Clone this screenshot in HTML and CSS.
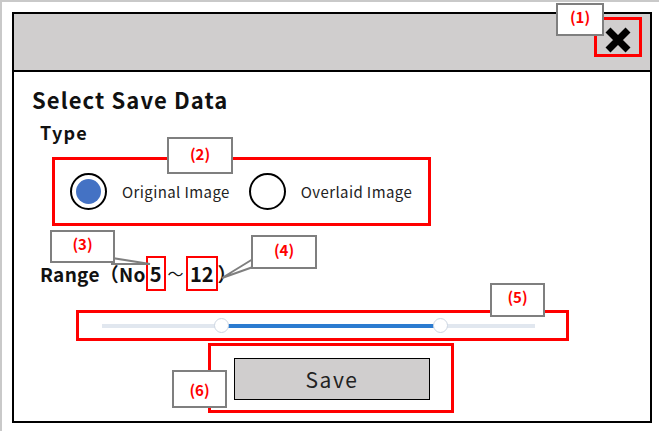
FILE: index.html
```html
<!DOCTYPE html>
<html>
<head>
<meta charset="utf-8">
<link rel="stylesheet" href="styles.css">
</head>
<body>
<div class="dialog">
  <div class="header">
    <div class="close hl">
      <svg width="28" height="26" viewBox="0 0 28 26"><path d="M4 3 L24 23 M24 3 L4 23" stroke="#000" stroke-width="7"/></svg>
    </div>
  </div>
  <div class="content">
    <div class="title">Select Save Data</div>
    <div class="label">Type</div>
    <div class="radios hl">
      <div class="radio">
        <span class="dot checked"></span>
        <span class="rtext">Original Image</span>
      </div>
      <div class="radio">
        <span class="dot"></span>
        <span class="rtext">Overlaid Image</span>
      </div>
    </div>
    <div class="range">Range（No<span class="num hl">5</span><span class="tilde">～</span><span class="num hl">12</span>）</div>
    <div class="slider hl">
      <div class="track">
        <div class="fill" style="left:120px;width:219px"></div>
        <span class="thumb" style="left:120px"></span>
        <span class="thumb" style="left:339px"></span>
      </div>
    </div>
    <div class="save-wrap hl">
      <button class="save">Save</button>
    </div>
  </div>

  <svg class="tails" width="640" height="411" viewBox="0 0 640 411">
    <polygon points="98,250 136,250 98,244" fill="#fff" stroke="#7f7f7f" stroke-width="2"/>
    <polygon points="239,245 208,264 239,253" fill="#fff" stroke="#7f7f7f" stroke-width="2"/>
  </svg>
  <div class="callout c1">(1)</div>
  <div class="callout c2">(2)</div>
  <div class="callout c3">(3)</div>
  <div class="callout c4">(4)</div>
  <div class="callout c5">(5)</div>
  <div class="callout c6">(6)</div>
</div>
</body>
</html>
```
FILE: styles.css
```css
html, body {
  margin: 0;
  padding: 0;
  background: #fff;
}
body {
  width: 659px;
  height: 431px;
  box-sizing: border-box;
  border-top: 2px solid #c9c9c9;
  border-left: 2px solid #c9c9c9;
  font-family: "Noto Sans CJK JP", "Noto Sans", sans-serif;
  color: #111;
  overflow: hidden;
}
.dialog {
  position: relative;
  margin: 10px 0 0 10px;
  width: 640px;
  height: 411px;
  box-sizing: border-box;
  border: 2px solid #000;
}
.header {
  height: 56px;
  background: #d0cece;
  border-bottom: 2px solid #000;
  display: flex;
  justify-content: flex-end;
  align-items: flex-start;
}
.hl {
  border: 3px solid #ff0000;
  box-sizing: border-box;
}
.close {
  width: 48px;
  height: 40px;
  margin: 3px 8px 0 0;
  padding-top: 6px;
  display: flex;
  align-items: center;
  justify-content: center;
}
.close svg { display: block; }
.content {
  padding: 0 0 0 18px;
}
.title {
  font-weight: bold;
  font-size: 22px;
  line-height: 26px;
  letter-spacing: 1.1px;
  margin-top: 14px;
  height: 26px;
}
.label {
  font-weight: bold;
  font-size: 18px;
  line-height: 22px;
  letter-spacing: 1.2px;
  margin: 9px 0 0 8px;
  height: 22px;
}
.radios {
  margin: 14px 0 0 20px;
  width: 379px;
  height: 69px;
  display: flex;
  align-items: center;
  padding-left: 15px;
}
.radio {
  display: flex;
  align-items: center;
}
.radio + .radio { margin-left: 19px; }
.dot {
  width: 37px;
  height: 37px;
  border-radius: 50%;
  border: 2px solid #000;
  box-sizing: border-box;
  background: #fff;
  position: relative;
}
.dot.checked::after {
  content: "";
  position: absolute;
  left: 4px;
  top: 4px;
  width: 25px;
  height: 25px;
  border-radius: 50%;
  background: #4472c4;
}
.rtext {
  font-size: 15px;
  color: #222;
  margin-left: 15px;
  letter-spacing: 0.4px;
}
.range {
  font-weight: bold;
  font-size: 19px;
  line-height: 35px;
  letter-spacing: 0.3px;
  margin: 30px 0 0 8px;
  height: 35px;
  display: flex;
  align-items: center;
}
.num {
  display: inline-flex;
  align-items: center;
  justify-content: center;
  height: 35px;
  font-weight: bold;
  font-size: 20px;
  padding: 0 2px;
  border-width: 2px;
  letter-spacing: 0;
}
.tilde {
  font-weight: normal;
  font-size: 16px;
  margin: 0 2px;
}
.slider {
  margin: 19px 0 0 44px;
  width: 493px;
  height: 31px;
  padding: 0 30px 0 23px;
  display: flex;
  align-items: center;
}
.track {
  position: relative;
  width: 433px;
  height: 4px;
  background: #e1e7ef;
}
.fill {
  position: absolute;
  top: 0;
  height: 4px;
  background: #2b7bd0;
}
.thumb {
  position: absolute;
  top: -6px;
  width: 15px;
  height: 15px;
  margin-left: -8px;
  box-sizing: border-box;
  border-radius: 50%;
  background: #fff;
  border: 1.5px solid #cdd6e2;
}
.save-wrap {
  margin: 2px 0 0 176px;
  width: 246px;
  height: 70px;
  padding: 12px 0 0 23px;
}
.save {
  width: 196px;
  height: 42px;
  background: #d0cece;
  border: 1px solid #000;
  font-family: "Noto Sans CJK JP", "Noto Sans", sans-serif;
  font-size: 21px;
  color: #222;
  letter-spacing: 1.5px;
  padding: 0;
}
.tails {
  position: absolute;
  left: 0;
  top: 0;
  pointer-events: none;
}
.callout {
  position: absolute;
  background: #fff;
  border: 2px solid #7f7f7f;
  box-sizing: border-box;
  color: #ff0000;
  font-weight: bold;
  font-size: 15px;
  display: flex;
  align-items: center;
  justify-content: center;
}
.c1 { left: 542px; top: -11px; width: 48px; height: 33px; padding-bottom: 6px; }
.c2 { left: 153px; top: 123px; width: 66px; height: 37px; padding-bottom: 4px; }
.c3 { left: 36px; top: 216px; width: 65px; height: 33px; padding-bottom: 6px; }
.c4 { left: 237px; top: 221px; width: 66px; height: 34px; padding-bottom: 6px; }
.c5 { left: 476px; top: 269px; width: 55px; height: 34px; padding-bottom: 8px; }
.c6 { left: 158px; top: 356px; width: 55px; height: 38px; }
```
